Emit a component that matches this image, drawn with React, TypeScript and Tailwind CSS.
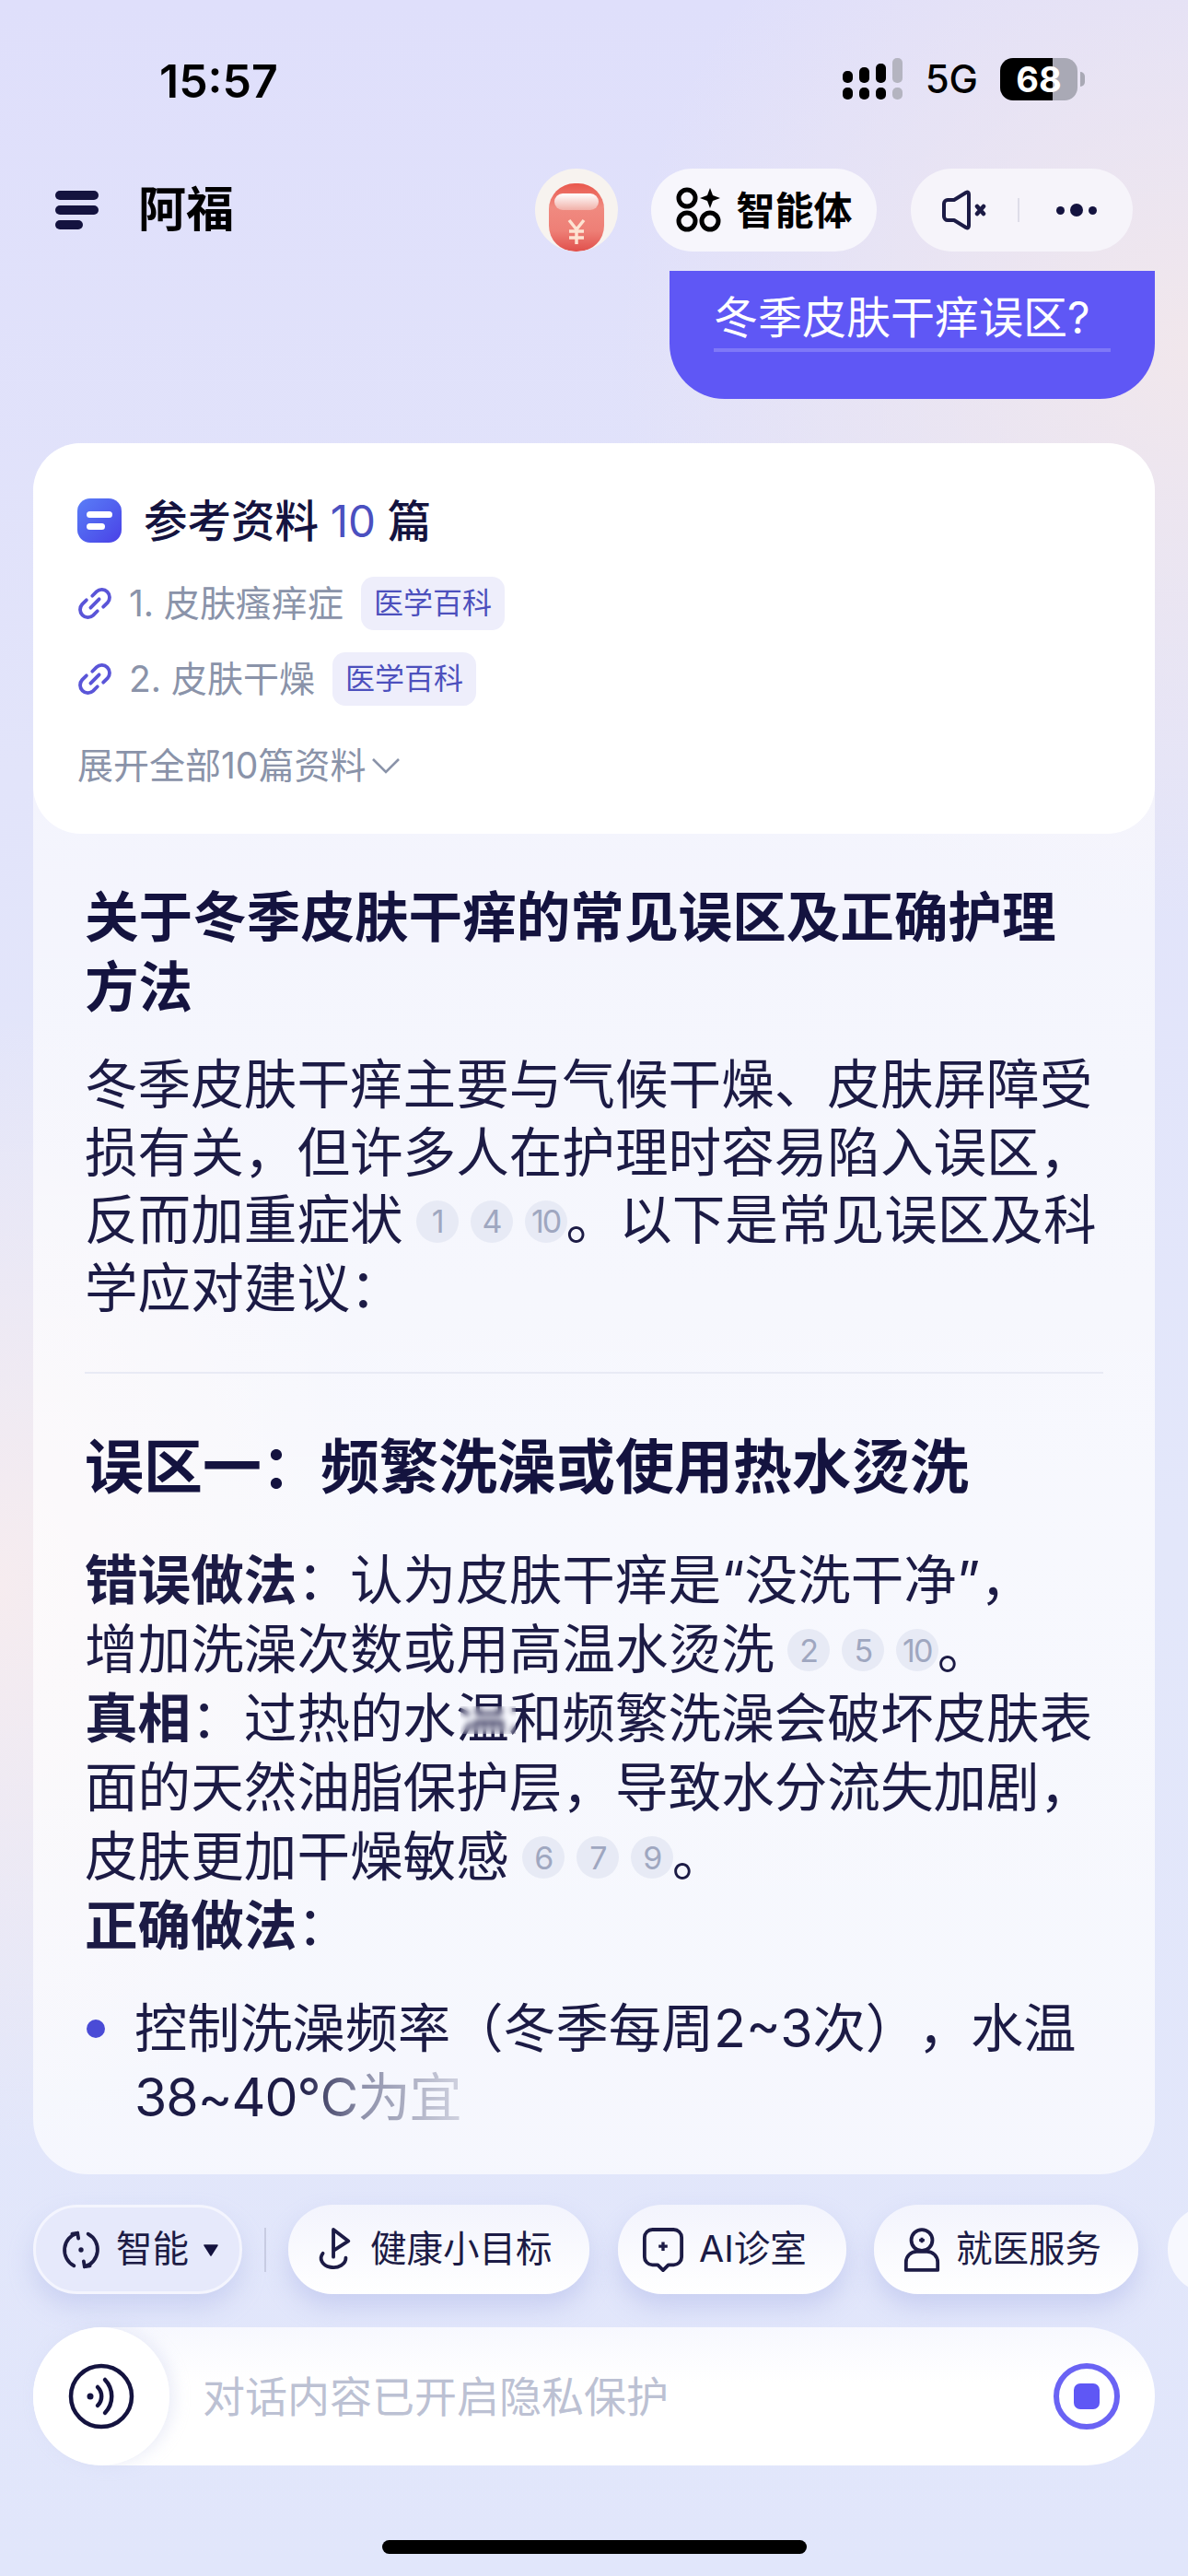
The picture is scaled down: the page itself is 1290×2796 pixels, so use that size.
import React from "react";

const Cite = ({ n }: { n: string }) => (
  <span className="ml-[14px] mr-[-1px] inline-flex h-[46px] w-[46px] translate-y-[-4px] items-center justify-center rounded-full bg-[#e7eaf5] align-middle text-[34px] font-normal tracking-[-2px] text-[#9fa7c0]">
    {n}
  </span>
);

const LinkIcon = () => (
  <svg viewBox="0 0 24 24" className="ml-[-3px] h-[44px] w-[44px] shrink-0" fill="none" stroke="#5a55d8" strokeWidth="2.1" strokeLinecap="round">
    <path d="M10.5 7.5L13 5a4.6 4.6 0 0 1 6.5 6.5L17 14" />
    <path d="M13.5 16.5L11 19a4.6 4.6 0 0 1-6.5-6.5L7 10" />
    <path d="M9.5 14.5l5-5" />
  </svg>
);

const SourceRow = ({ label }: { label: string }) => (
  <div className="flex h-[58px] items-center">
    <LinkIcon />
    <span className="ml-[15px] text-[39px] text-[#8a93a9]">{label}</span>
    <span className="ml-[19px] flex h-[58px] items-center rounded-[14px] bg-[#eeeefb] px-[14px] text-[32px] text-[#4c50bd]">
      医学百科
    </span>
  </div>
);

const Chip = ({ icon, label, className }: { icon: React.ReactNode; label: string; className: string }) => (
  <div className={`flex h-[97px] shrink-0 items-center rounded-[48px] bg-gradient-to-b from-[#f3f4fd] to-white text-[39.5px] text-[#1c1b45] shadow-[0_14px_26px_rgba(170,180,230,0.45)] ${className}`}>
    {icon}
    {label}
  </div>
);

export default function App() {
  return (
    <div className="flex h-[2796px] w-[1290px] flex-col overflow-hidden bg-[radial-gradient(ellipse_620px_620px_at_1290px_380px,#f1e7ec_0%,rgba(241,231,236,0)_100%),radial-gradient(ellipse_420px_620px_at_0px_1720px,#f6ecef_0%,rgba(246,236,239,0)_100%),linear-gradient(180deg,#dfdffb_0%,#e2e4fa_30%,#e3e7fa_60%,#e1e6fb_100%)] font-['Inter','Noto_Sans_CJK_SC',sans-serif] text-[#1c1b45] [text-spacing-trim:space-all]">
      {/* status bar */}
      <div className="flex h-[183px] shrink-0 items-start justify-between pl-[173px] pr-[112px] pt-[57px] text-black">
        <span className="text-[50px] font-semibold leading-[62px]">15:57</span>
        <div className="flex items-center pt-[6px]">
          <svg viewBox="0 0 66 46" className="h-[46px] w-[66px]">
            <g fill="#000">
              <rect x="0" y="14" width="11" height="13" rx="5" />
              <rect x="0" y="32" width="11" height="13" rx="5" />
              <rect x="18" y="10" width="11" height="17" rx="5" />
              <rect x="18" y="32" width="11" height="13" rx="5" />
              <rect x="36" y="6" width="11" height="21" rx="5" />
              <rect x="36" y="32" width="11" height="13" rx="5" />
            </g>
            <rect x="54" y="0" width="11" height="27" rx="5" fill="#b4b4c0" />
            <rect x="54" y="32" width="11" height="13" rx="5" fill="#b4b4c0" />
          </svg>
          <span className="ml-[24px] text-[42px] font-medium leading-[46px]">5G</span>
          <div className="ml-[24px] flex h-[46px] w-[84px] items-center justify-center overflow-hidden rounded-[14px] bg-[linear-gradient(90deg,#000_0%,#000_68%,#a9a9b5_68%,#a9a9b5_100%)] text-[38px] font-bold leading-none text-white">
            68
          </div>
          <div className="ml-[3px] h-[16px] w-[5px] rounded-r-full bg-[#a9a9b5]" />
        </div>
      </div>

      {/* header */}
      <div className="flex h-[90px] shrink-0 items-center pl-[60px] pr-[60px]">
        <div className="flex w-[47px] flex-col gap-[6px]">
          <div className="h-[10px] w-[47px] rounded-full bg-[#14133f]" />
          <div className="h-[10px] w-[47px] rounded-full bg-[#14133f]" />
          <div className="h-[10px] w-[30px] rounded-full bg-[#14133f]" />
        </div>
        <span className="ml-[43px] text-[52px] font-bold text-black">阿福</span>
        <div className="ml-auto h-[90px] w-[90px] overflow-hidden rounded-full bg-[#f7f3ef]">
          <svg viewBox="0 0 90 90" className="h-[90px] w-[90px]">
            <defs>
              <linearGradient id="pkt" x1="0" y1="0" x2="0" y2="1">
                <stop offset="0" stopColor="#e9574c" />
                <stop offset="0.35" stopColor="#f08a80" />
                <stop offset="0.7" stopColor="#ee7f76" />
                <stop offset="1" stopColor="#e0504c" />
              </linearGradient>
              <linearGradient id="flap" x1="0" y1="0" x2="0" y2="1">
                <stop offset="0" stopColor="#ffffff" />
                <stop offset="1" stopColor="#f1b0a8" />
              </linearGradient>
            </defs>
            <rect x="15" y="16" width="60" height="74" rx="28" fill="url(#pkt)" />
            <rect x="21" y="27" width="48" height="18" rx="9" fill="url(#flap)" />
            <g stroke="#fde3d2" strokeWidth="3.5" fill="none">
              <path d="M37 56l8 10 8-10" />
              <path d="M45 66v16M37 68h16M37 75h16" />
            </g>
          </svg>
        </div>
        <div className="ml-[36px] flex h-[90px] w-[245px] items-center justify-center gap-[14px] rounded-[45px] bg-[#f7f6fc] text-[42px] font-semibold text-black">
          <svg viewBox="0 0 52 52" className="h-[52px] w-[52px]" fill="none" stroke="#000" strokeWidth="5">
            <circle cx="13" cy="13" r="9" />
            <circle cx="13" cy="38" r="9" />
            <circle cx="38" cy="38" r="9" />
            <path d="M38 2l3 8 8 3-8 3-3 8-3-8-8-3 8-3z" fill="#000" stroke="none" />
          </svg>
          智能体
        </div>
        <div className="ml-[37px] flex h-[90px] w-[241px] items-center rounded-[45px] bg-[#f6f4fa] pl-[34px]">
          <svg viewBox="0 0 48 44" className="h-[44px] w-[48px]" fill="none" stroke="#1c1b45" strokeWidth="4" strokeLinecap="round" strokeLinejoin="round">
            <path d="M13 11l13-8c2-1 3 0 3 2v34c0 2-1 3-3 2l-13-8H6c-2 0-4-2-4-4V15c0-2 2-4 4-4z" />
            <path d="M38 18l7 8M45 18l-7 8" strokeWidth="4.5" />
          </svg>
          <div className="ml-[34px] h-[26px] w-[2px] bg-[#dedde8]" />
          <div className="ml-[40px] flex items-center gap-[6px]">
            <div className="h-[9px] w-[9px] rounded-full bg-[#14133f]" />
            <div className="h-[14px] w-[14px] rounded-full bg-[#14133f]" />
            <div className="h-[9px] w-[9px] rounded-full bg-[#14133f]" />
          </div>
        </div>
      </div>

      {/* conversation */}
      <div className="mt-[21px] flex h-[2066px] shrink-0 flex-col overflow-hidden px-[36px]">
        <div className="flex shrink-0 justify-end">
          <div className="flex h-[139px] w-[527px] flex-col rounded-b-[60px] bg-[#5f57f5] pl-[48px] pt-[22px] text-white">
            <span className="text-[48px] leading-[58px]">冬季皮肤干痒误区?</span>
            <div className="mt-[4px] h-[4px] w-[431px] bg-[#7f78f7]" />
          </div>
        </div>

        <div className="mt-[48px] flex h-[1879px] shrink-0 flex-col rounded-t-[52px] rounded-b-[60px] bg-[linear-gradient(180deg,rgba(255,255,255,0.55)_0%,rgba(255,255,255,0.72)_60%,rgba(255,255,255,0.68)_100%)]">
          {/* sources */}
          <div className="flex h-[424px] shrink-0 flex-col rounded-[52px] bg-white pl-[48px] pt-[54px]">
            <div className="flex h-[60px] items-center">
              <div className="flex h-[48px] w-[48px] flex-col items-center justify-center gap-[6px] rounded-[14px] bg-gradient-to-br from-[#5a7df7] to-[#4a3fe6]">
                <div className="h-[7px] w-[28px] rounded-full bg-white" />
                <div className="ml-[10px] h-[7px] w-[20px] self-start rounded-full bg-white" />
              </div>
              <span className="ml-[24px] translate-y-[1px] text-[47.5px] font-medium text-[#14133f]">
                参考资料 <span className="font-normal text-[#4b50c0]">10</span> 篇
              </span>
            </div>
            <div className="mt-[31px] flex flex-col gap-[24px]">
              <SourceRow label="1. 皮肤瘙痒症" />
              <SourceRow label="2. 皮肤干燥" />
            </div>
            <div className="mt-[40px] flex h-[50px] items-center text-[39px] text-[#8a93a9]">
              展开全部10篇资料
              <svg viewBox="0 0 32 20" className="ml-[6px] h-[20px] w-[32px]" fill="none" stroke="#8a93a9" strokeWidth="2.6">
                <path d="M2 3l14 14L30 3" />
              </svg>
            </div>
          </div>

          {/* answer */}
          <div className="flex flex-1 flex-col overflow-hidden pl-[56px] pr-[50px] pt-[53px] text-[57.6px] leading-[75px]">
            <h1 className="w-[1090px] text-[58.6px] font-bold leading-[76px] text-[#14133f]">关于冬季皮肤干痒的常见误区及正确护理方法</h1>
            <p className="mt-[31px] leading-[73.7px]">
              冬季皮肤干痒主要与气候干燥、皮肤屏障受损有关，但许多人在护理时容易陷入误区，反而加重症状
              <Cite n="1" />
              <Cite n="4" />
              <Cite n="10" />
              。以下是常见误区及科学应对建议：
            </p>
            <div className="mt-[53px] h-[2px] w-[1106px] bg-[#e8eaf5]" />
            <h2 className="mt-[64px] text-[64px] font-bold leading-[74px] text-[#14133f]">误区一：频繁洗澡或使用热水烫洗</h2>
            <div className="relative mt-[49px]">
              <p>
                <b>错误做法</b>：认为皮肤干痒是“没洗干净”，
                <br />
                增加洗澡次数或用高温水烫洗
                <Cite n="2" />
                <Cite n="5" />
                <Cite n="10" />
                。
              </p>
              <p>
                <b>真相</b>：过热的水温和频繁洗澡会破坏皮肤表面的天然油脂保护层，导致水分流失加剧，皮肤更加干燥敏感
                <Cite n="6" />
                <Cite n="7" />
                <Cite n="9" />
                。
              </p>
              <p>
                <b>正确做法</b>：
              </p>
              {/* smudged patch over the character in the screenshot */}
              <div className="absolute left-[408px] top-[174px] h-[30px] w-[60px] backdrop-blur-[3px]" />
            </div>
            <div className="mt-[36px] flex">
              <div className="ml-[2px] mt-[28px] h-[20px] w-[20px] shrink-0 rounded-full bg-[#4a4bd6]" />
              <p className="ml-[32px] w-[1050px] text-[57.2px]">
                控制洗澡频率（冬季每周2~3次），水温
                <span className="bg-[linear-gradient(90deg,#1c1b45_0%,#1c1b45_50%,#8f92ab_70%,#d0d2e0_100%)] bg-clip-text tracking-[-1px] text-transparent">38~40°C为宜</span>
              </p>
            </div>
          </div>
        </div>
      </div>

      {/* quick actions */}
      <div className="mt-[33px] flex h-[97px] shrink-0 items-center pl-[36px]">
        <div className="flex h-[97px] w-[227px] shrink-0 items-center rounded-[48px] border-[3px] border-[#f4f5fe] bg-[#e6e9fb] pl-[26px] text-[39.5px] text-[#1c1b45] shadow-[0_14px_26px_rgba(170,180,230,0.4)]">
          <svg viewBox="0 0 48 48" className="h-[46px] w-[46px]" fill="none" stroke="#1c1b45" strokeWidth="4" strokeLinecap="round" strokeLinejoin="round">
            <path d="M20 5A20 20 0 0 0 16 42" />
            <path d="M28 43A20 20 0 0 0 32 6" />
            <path d="M14 6l6-1 1 6M34 42l-6 1-1-6" />
            <circle cx="24" cy="24" r="2.8" fill="#1c1b45" stroke="none" />
          </svg>
          <span className="ml-[15px]">智能</span>
          <svg viewBox="0 0 16 14" className="ml-[16px] h-[14px] w-[16px]">
            <path d="M1 2h14L8 13z" fill="#14133f" stroke="#14133f" strokeWidth="1.5" strokeLinejoin="round" />
          </svg>
        </div>
        <div className="ml-[24px] h-[48px] w-[2px] shrink-0 bg-[#c8cce2]" />
        <Chip
          className="ml-[24px] w-[327px] pl-[27px]"
          label="健康小目标"
          icon={
            <svg viewBox="0 0 48 52" className="mr-[16px] h-[52px] w-[46px]" fill="none" stroke="#1c1b45" strokeWidth="4" strokeLinecap="round" strokeLinejoin="round">
              <path d="M23 34V3l17 13-17 11" />
              <path d="M11 30a14 10.5 0 1 0 26 5" />
            </svg>
          }
        />
        <Chip
          className="ml-[31px] w-[248px] pl-[26px]"
          label="AI诊室"
          icon={
            <svg viewBox="0 0 48 52" className="mr-[16px] h-[52px] w-[46px]" fill="none" stroke="#1c1b45" strokeWidth="4" strokeLinejoin="round">
              <path d="M12 3h24a9 9 0 0 1 9 9v22a9 9 0 0 1-9 9h-6l-6 6-6-6h-6a9 9 0 0 1-9-9V12a9 9 0 0 1 9-9z" />
              <path d="M24 17v10M19 22h10" strokeWidth="3.5" />
            </svg>
          }
        />
        <Chip
          className="ml-[30px] w-[287px] pl-[31px]"
          label="就医服务"
          icon={
            <svg viewBox="0 0 44 52" className="mr-[16px] h-[52px] w-[42px]" fill="none" stroke="#1c1b45" strokeWidth="4" strokeLinejoin="round">
              <circle cx="22" cy="15" r="12" />
              <path d="M19 15h6M22 12v6" strokeWidth="3" />
              <path d="M16 28h12a12 12 0 0 1 12 12v9H4v-9a12 12 0 0 1 12-12z" />
            </svg>
          }
        />
        <div className="ml-[32px] h-[97px] w-[100px] shrink-0 rounded-[48px] bg-[#f7f8fe]" />
      </div>

      {/* input */}
      <div className="mx-[36px] mt-[36px] flex h-[150px] shrink-0 items-center rounded-[75px] bg-gradient-to-b from-[#f7f8fe] to-white to-40% pr-[38px]">
        <div className="flex h-[150px] w-[148px] shrink-0 items-center justify-center rounded-[75px] bg-white shadow-[6px_0_16px_rgba(200,205,235,0.35)]">
          <svg viewBox="0 0 72 72" className="h-[72px] w-[72px]" fill="none" stroke="#14133f" strokeWidth="4.5" strokeLinecap="round">
            <circle cx="36" cy="36" r="33" />
            <circle cx="24" cy="36" r="3.5" fill="#14133f" stroke="none" />
            <path d="M32 26a14 14 0 0 1 0 20" />
            <path d="M40 18a26 26 0 0 1 0 36" />
          </svg>
        </div>
        <span className="ml-[36px] text-[46px] text-[#bcc1d3]">对话内容已开启隐私保护</span>
        <div className="ml-auto flex h-[72px] w-[72px] items-center justify-center rounded-full border-[6px] border-[#6a63f4]">
          <div className="h-[28px] w-[28px] rounded-[7px] bg-[#5f57f5]" />
        </div>
      </div>

      {/* home bar */}
      <div className="mt-[81px] h-[15px] w-[461px] shrink-0 self-center rounded-full bg-black" />
    </div>
  );
}
